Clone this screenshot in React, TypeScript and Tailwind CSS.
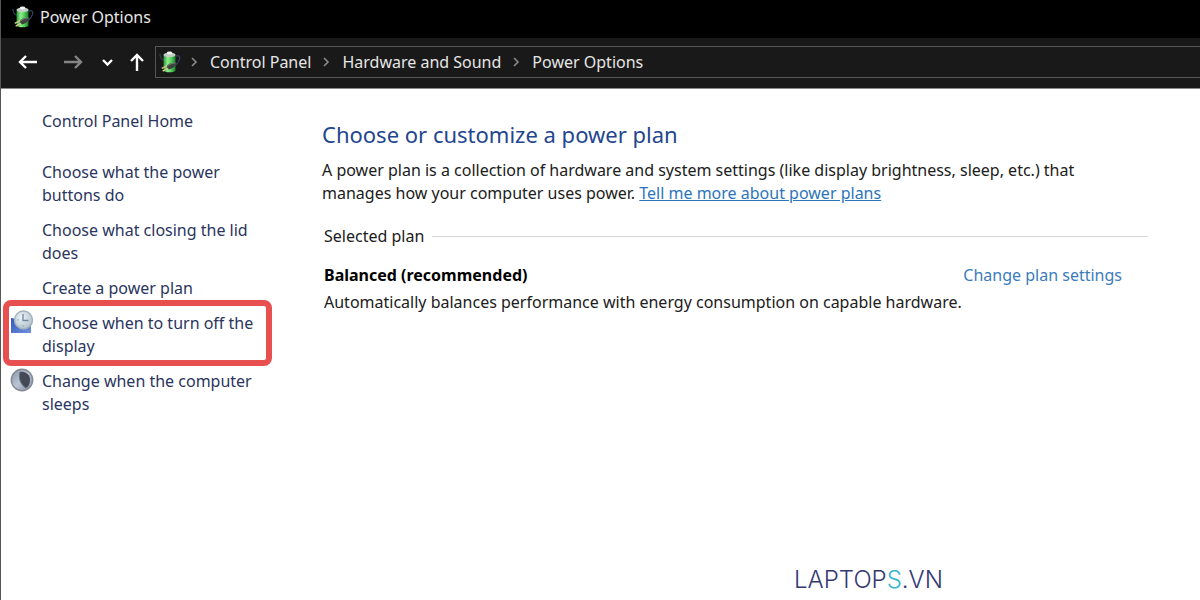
import React from 'react';

const crumbs = ['Control Panel', 'Hardware and Sound', 'Power Options'];

const tasks = [
    { label: 'Choose what the power buttons do' },
    { label: 'Choose what closing the lid does' },
    { label: 'Create a power plan' },
    { label: 'Choose when to turn off the display', icon: <ClockIcon />, highlight: true },
    { label: 'Change when the computer sleeps', icon: <MoonIcon /> },
];

function BatteryIcon({ id }: { id: string }) {
    return (
        <svg width="22" height="24" viewBox="0 0 24 24" aria-hidden="true">
            <defs>
                <linearGradient id={id} x1="0" x2="1" y1="0" y2="0">
                    <stop offset="0" stopColor="#2f9a3c" />
                    <stop offset="0.35" stopColor="#8df08c" />
                    <stop offset="0.7" stopColor="#45c552" />
                    <stop offset="1" stopColor="#1d7a2c" />
                </linearGradient>
            </defs>
            <path d="M1 3c0 4 2 7 5 7M18 6c3-2 6 0 4 4-1 3-3 5-5 6" fill="none" stroke="#343e5a" strokeWidth="1.4" />
            <path d="M5 4h13v17c0 3-13 3-13 0z" fill={`url(#${id})`} />
            <ellipse cx="11.500" cy="4.200" rx="6.500" ry="2.600" fill="#c3cec6" />
            <ellipse cx="11.500" cy="2.200" rx="3" ry="1.600" fill="#f3f5f3" />
            <path d="M8 17c2-3 6-5 11-4-1 4-5 7-9 7z" fill="#3d443f" />
            <path d="M10 16c2-2 5-3 8-3" stroke="#858c86" fill="none" />
            <path d="M3 19l6-3M4 22l6-3" stroke="#d6c689" strokeWidth="1.600" />
        </svg>
    );
}

function ClockIcon() {
    return (
        <svg width="24" height="24" viewBox="0 0 24 24" aria-hidden="true">
            <defs>
                <linearGradient id="screen" x1="0" x2="1" y1="0" y2="1">
                    <stop offset="0" stopColor="#2f55bd" />
                    <stop offset="1" stopColor="#6f93dc" />
                </linearGradient>
                <radialGradient id="dial" cx="0.4" cy="0.35" r="0.7">
                    <stop offset="0" stopColor="#eef4f8" />
                    <stop offset="1" stopColor="#aebfca" />
                </radialGradient>
            </defs>
            <path d="M1 8l20 4v11H1z" fill="url(#screen)" />
            <circle cx="13.500" cy="10" r="9" fill="url(#dial)" stroke="#a3b1bb" strokeWidth="1.400" />
            <path d="M13 4v6.500h5.500" fill="none" stroke="#71859a" strokeWidth="1.300" />
            <path d="M13 15v2M7 10h2" stroke="#9aabb7" />
        </svg>
    );
}

function MoonIcon() {
    return (
        <svg width="24" height="24" viewBox="0 0 24 24" aria-hidden="true">
            <defs>
                <linearGradient id="moon" x1="0" x2="1" y1="0" y2="1">
                    <stop offset="0" stopColor="#8490a3" />
                    <stop offset="0.5" stopColor="#bcc5d6" />
                    <stop offset="1" stopColor="#7e899e" />
                </linearGradient>
            </defs>
            <circle cx="12" cy="12" r="10.700" fill="url(#moon)" stroke="#858b94" strokeWidth="1.400" />
            <path d="M10 4c6-1 10 3 10 8 0 4-2 7-4 8-5-3-8-9-6-16z" fill="#434955" />
            <path d="M10 4c-2 7 1 13 6 16" fill="none" stroke="#687181" />
        </svg>
    );
}

function Chevron() {
    return (
        <svg width="7" height="10" viewBox="0 0 7 10" fill="none" stroke="#8b8b8b" strokeWidth="1.600" aria-hidden="true">
            <path d="M1 1l4 4-4 4" />
        </svg>
    );
}

export default function App() {
    return (
        <div className="flex min-h-screen flex-col overflow-x-hidden border-l border-[#555555] bg-white font-['Noto_Sans','Open_Sans',sans-serif] text-base leading-[23px]">
            <header>
                <div className="flex h-[38px] items-center gap-1.5 bg-black pb-1 pl-[11px] text-[#e6e6e6]">
                    <BatteryIcon id="titleBattery" />
                    <span>Power Options</span>
                </div>

                <div className="flex h-[51px] items-center border-b border-[#8a8a8a] bg-[#191919] pb-0.5 pl-[17px]">
                    <div className="flex items-center">
                        <button aria-label="Back">
                            <svg width="20" height="18" viewBox="0 0 20 18" fill="none" stroke="#ffffff" strokeWidth="2.400">
                                <path d="M8 3L2 9l6 6M2 9h17" />
                            </svg>
                        </button>
                        <button aria-label="Forward" className="ml-[25px]">
                            <svg width="20" height="18" viewBox="0 0 20 18" fill="none" stroke="#858585" strokeWidth="2.400">
                                <path d="M12 3l6 6-6 6M18 9H1" />
                            </svg>
                        </button>
                        <button aria-label="Recent locations" className="ml-[19px]">
                            <svg width="11" height="18" viewBox="0 0 11 18" fill="none" stroke="#ffffff" strokeWidth="2.400">
                                <path d="M1 7l4.500 4.500L10 7" />
                            </svg>
                        </button>
                        <button aria-label="Up" className="ml-4">
                            <svg width="16" height="18" viewBox="0 0 16 18" fill="none" stroke="#ffffff" strokeWidth="2.400">
                                <path d="M2 8l6-6 6 6M8 2v16" />
                            </svg>
                        </button>
                    </div>

                    {/* Address bar */}
                    <nav className="ml-2.5 flex h-8 flex-1 items-center border border-r-0 border-[#555555] pl-[3px] text-[#e6e6e6]" aria-label="Address">
                        <BatteryIcon id="addressBattery" />
                        <ol className="flex items-center gap-3 pl-2.5">
                            {crumbs.map((crumb) => (
                                <li key={crumb} className="flex items-center gap-3">
                                    <Chevron />
                                    <a href="#">{crumb}</a>
                                </li>
                            ))}
                        </ol>
                    </nav>
                </div>
            </header>

            <div className="flex flex-1">
                <aside className="w-[281px] shrink-0 pt-[21px] text-[#2a3560]">
                    <a href="#" className="ml-[41px] block">Control Panel Home</a>
                    <ul className="mt-7 flex flex-col gap-3">
                        {tasks.map((task) => (
                            <li key={task.label} className="relative flex pl-[9px]">
                                <span className="-mt-0.5 mr-2 h-6 w-6 shrink-0">{task.icon}</span>
                                <a href="#" className="w-[220px]">{task.label}</a>
                                {task.highlight && (
                                    <span className="pointer-events-none absolute -bottom-2 -top-3 left-0.5 right-2.5 rounded-lg border-[6px] border-[#e8504f]" />
                                )}
                            </li>
                        ))}
                    </ul>
                </aside>

                <main className="flex flex-1 flex-col pl-10 pr-[52px] pt-8 text-[#202020]">
                    <h1 className="text-[22px] leading-[26px] text-[#24468f]">Choose or customize a power plan</h1>
                    <p className="mt-3 max-w-[790px]">
                        A power plan is a collection of hardware and system settings (like display brightness, sleep, etc.) that
                        manages how your computer uses power.{' '}
                        <a href="#" className="text-[#2b75bb] underline">Tell me more about power plans</a>
                    </p>

                    <section className="mt-5 pl-0.5">
                        <div className="flex items-center gap-2">
                            <h2>Selected plan</h2>
                            <hr className="flex-1 border-[#d5d5d5]" />
                        </div>
                        <div className="mt-4 flex justify-between pr-[26px]">
                            <h3 className="font-bold text-black">Balanced (recommended)</h3>
                            <a href="#" className="text-[#3b7cbd]">Change plan settings</a>
                        </div>
                        <p className="mt-1">Automatically balances performance with energy consumption on capable hardware.</p>
                    </section>

                    <footer className="mt-auto flex justify-end pb-1 pr-[205px] font-['Inter',sans-serif] text-2xl font-light leading-8 text-[#343974]">
                        <span>LAPTOP<span className="text-[#38b6cf]">S</span>.VN</span>
                    </footer>
                </main>
            </div>
        </div>
    );
}
